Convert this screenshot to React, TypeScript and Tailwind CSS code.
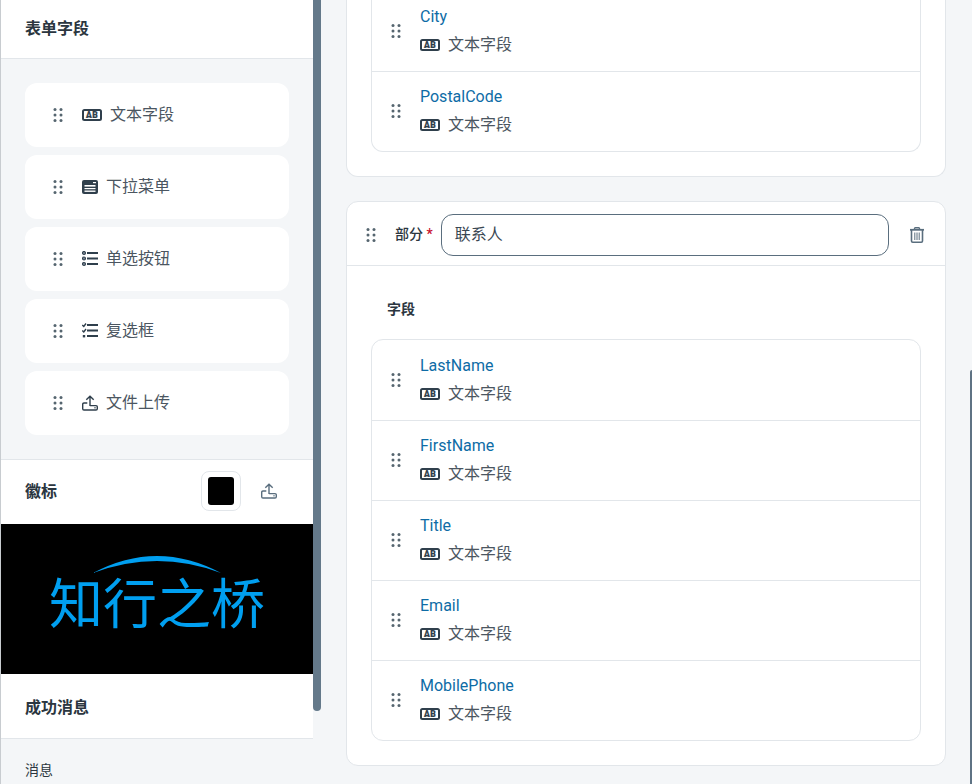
const font = "font-['Roboto','Noto_Sans_CJK_SC',sans-serif]";

function Grip() {
  return (
    <svg width="16" height="16" viewBox="0 0 16 16" fill="#55656f" className="shrink-0">
      <circle cx="5" cy="2.5" r="1.5" />
      <circle cx="11" cy="2.5" r="1.5" />
      <circle cx="5" cy="8" r="1.5" />
      <circle cx="11" cy="8" r="1.5" />
      <circle cx="5" cy="13.5" r="1.5" />
      <circle cx="11" cy="13.5" r="1.5" />
    </svg>
  );
}

function TextIcon() {
  return (
    <svg width="20" height="14" viewBox="0 0 20 14" className="shrink-0">
      <rect x="1" y="2" width="18" height="10" rx="1.5" fill="none" stroke="#2f3f4c" strokeWidth="2" />
      <text x="10" y="10.2" textAnchor="middle" fontSize="8.5" fontWeight="900" letterSpacing="0.3" stroke="#2f3f4c" strokeWidth="0.2" fill="#2f3f4c" fontFamily="Roboto, sans-serif">AB</text>
    </svg>
  );
}

function SelectIcon() {
  return (
    <svg width="16" height="16" viewBox="0 0 16 16" className="shrink-0">
      <rect x="0" y="1" width="16" height="14" rx="2" fill="#2f3f4c" />
      <rect x="2.5" y="6" width="11" height="1.6" fill="#fff" />
      <rect x="2.5" y="9" width="11" height="1.2" fill="#fff" />
      <rect x="2.5" y="11.5" width="11" height="1.4" fill="#fff" />
      <rect x="11" y="3" width="3" height="1.2" fill="#fff" />
    </svg>
  );
}

function RadioIcon() {
  return (
    <svg width="16" height="16" viewBox="0 0 16 16" className="shrink-0">
      <circle cx="2" cy="2" r="1.5" fill="#7a8794" stroke="#2f3f4c" strokeWidth="1.1" />
      <circle cx="2" cy="7.5" r="1.5" fill="#7a8794" stroke="#2f3f4c" strokeWidth="1.1" />
      <circle cx="2" cy="13" r="1.5" fill="#7a8794" stroke="#2f3f4c" strokeWidth="1.1" />
      <rect x="5" y="1" width="11" height="2" fill="#2f3f4c" />
      <rect x="5" y="6.5" width="11" height="2" fill="#2f3f4c" />
      <rect x="5" y="12" width="11" height="2" fill="#2f3f4c" />
    </svg>
  );
}

function CheckIcon() {
  return (
    <svg width="16" height="16" viewBox="0 0 16 16" fill="none" className="shrink-0">
      <path d="M0.3 2 L1.8 3.5 L4 0.5" stroke="#2f3f4c" strokeWidth="1.4" />
      <path d="M0.3 7.5 L1.8 9 L4 6" stroke="#2f3f4c" strokeWidth="1.4" />
      <rect x="0.8" y="12" width="2.4" height="2.4" fill="#2f3f4c" />
      <rect x="5" y="1" width="11" height="2" fill="#2f3f4c" />
      <rect x="5" y="6.5" width="11" height="2" fill="#2f3f4c" />
      <rect x="5" y="12" width="11" height="2" fill="#2f3f4c" />
    </svg>
  );
}

function UploadIcon({ color = '#2f3f4c' }: { color?: string }) {
  return (
    <svg width="16" height="16" viewBox="0 0 16 16" fill="none" stroke={color} strokeWidth="1.4" className="shrink-0">
      <path d="M8 11 V1.2 M4.3 4.8 L8 1.2 L11.7 4.8" />
      <path d="M5.3 8 H2 Q0.7 8 0.7 9.3 V13.7 Q0.7 15 2 15 H14 Q15.3 15 15.3 13.7 V11.8 Q15.3 10.6 14 10.6 H8" />
      <circle cx="13" cy="12.8" r="0.5" fill={color} strokeWidth="0.4" />
    </svg>
  );
}

function TrashIcon() {
  return (
    <svg width="14" height="16" viewBox="0 0 14 16" fill="none" stroke="#5a6e7e" className="shrink-0">
      <path d="M0 2.8 H14" strokeWidth="1.8" />
      <path d="M4.5 2.5 V1.5 Q4.5 0.7 5.3 0.7 H8.7 Q9.5 0.7 9.5 1.5 V2.5" strokeWidth="1.4" />
      <path d="M1.5 3 V14 Q1.5 15.2 2.7 15.2 H11.3 Q12.5 15.2 12.5 14 V3" strokeWidth="1.6" />
      <path d="M4.8 5.5 V13 M7 5.5 V13 M9.2 5.5 V13" strokeWidth="1" />
    </svg>
  );
}

function PaletteItem({ icon, label }: { icon: React.ReactNode; label: string }) {
  return (
    <div className="h-16 rounded-xl bg-white flex items-center pl-[25px] gap-4 text-base text-[#4b5661]">
      <Grip />
      <div className="flex items-center gap-2">
        {icon}
        <span>{label}</span>
      </div>
    </div>
  );
}

function FieldRow({ name, first }: { name: string; first?: boolean }) {
  return (
    <div className={`h-20 pl-4 flex items-center gap-4 ${first ? '' : 'shadow-[inset_0_1px_0_#e2e6ea]'}`}>
      <Grip />
      <div className="flex flex-col gap-1 text-base">
        <span className="text-[#0e6ca6] leading-6">{name}</span>
        <div className="flex items-center gap-2 text-[#4b5661] leading-6">
          <TextIcon />
          <span>文本字段</span>
        </div>
      </div>
    </div>
  );
}

function Sidebar() {
  return (
    <aside className="w-[313px] h-full shrink-0 bg-[#f4f6f8] border-l border-[#c8ccd0] flex flex-col">
      <div className="h-[59px] shrink-0 bg-white border-b border-[#e2e6ea] flex items-center pl-6 pb-px text-base font-semibold text-[#2b3640]">
        表单字段
      </div>
      <div className="flex flex-col gap-2 pl-6 pr-6 pt-6 pb-6 border-b border-[#e2e6ea]">
        <PaletteItem icon={<TextIcon />} label="文本字段" />
        <PaletteItem icon={<SelectIcon />} label="下拉菜单" />
        <PaletteItem icon={<RadioIcon />} label="单选按钮" />
        <PaletteItem icon={<CheckIcon />} label="复选框" />
        <PaletteItem icon={<UploadIcon />} label="文件上传" />
      </div>
      <div className="h-16 shrink-0 bg-white flex items-center pl-6 pr-9 text-base font-semibold text-[#2b3640]">
        <span className="flex-1">徽标</span>
        <div className="w-10 h-10 mb-[2px] rounded-lg border border-[#e2e6ea] flex items-center justify-center">
          <div className="w-[26px] h-[28px] rounded-[3px] bg-black" />
        </div>
        <div className="ml-5 mb-[2px]">
          <UploadIcon color="#5a6e7e" />
        </div>
      </div>
      <div className="relative h-[150px] shrink-0 bg-black flex items-center justify-center">
        <svg width="130" height="18" viewBox="0 0 130 18" className="absolute left-[92px] top-[32px]">
          <path d="M0 17 Q64 -17 128 17 Q64 -7 0 17 Z" fill="#009ff0" />
        </svg>
        <span className="text-[54px] leading-none mt-[14px] font-normal text-[#009ff0]">知行之桥</span>
      </div>
      <div className="h-[65px] shrink-0 bg-white border-b border-[#e2e6ea] flex items-center pl-6 pt-[3px] text-base font-semibold text-[#2b3640]">
        成功消息
      </div>
      <div className="pl-6 pt-[21px] text-sm text-[#2b3640]">消息</div>
    </aside>
  );
}

export default function App() {
  return (
    <div className={`${font} relative w-[972px] h-screen overflow-hidden bg-[#f4f6f8] flex`}>
      <Sidebar />
      <div className="w-2 h-[711px] shrink-0 rounded-b-md bg-[#64798a]" />
      <main className="ml-[25px] w-[600px] -mt-[9px] flex flex-col gap-6">
        <section className="bg-white border border-t-0 border-[#e2e6ea] rounded-b-xl px-6 pb-6">
          <div className="border border-t-0 border-[#e2e6ea] rounded-b-xl">
            <FieldRow name="City" first />
            <FieldRow name="PostalCode" />
          </div>
        </section>
        <section className="bg-white border border-[#e2e6ea] rounded-xl">
          <div className="h-[64px] pt-[3px] border-b border-[#e2e6ea] flex items-center pl-4 gap-4">
            <Grip />
            <div className="flex items-center gap-2">
              <label className="pb-[3px] text-sm font-medium text-[#2b3640]">
                部分 <span className="text-[#c8102e]">*</span>
              </label>
              <div className="w-[448px] h-[42px] rounded-xl border border-[#5a6e7e] flex items-center pl-[13px] text-base text-[#3a4753]">
                联系人
              </div>
            </div>
            <div className="ml-[5px]">
              <TrashIcon />
            </div>
          </div>
          <div className="px-6 pb-6">
            <div className="h-[73px] pl-4 pt-[33px] text-sm font-semibold leading-5 text-[#2b3640]">字段</div>
            <div className="border border-[#e2e6ea] rounded-xl">
              <FieldRow name="LastName" first />
              <FieldRow name="FirstName" />
              <FieldRow name="Title" />
              <FieldRow name="Email" />
              <FieldRow name="MobilePhone" />
            </div>
          </div>
        </section>
      </main>
      <div className="absolute left-[970px] top-[370px] w-[2px] h-[414px] rounded-tl-sm bg-[#5f7384]" />
    </div>
  );
}
